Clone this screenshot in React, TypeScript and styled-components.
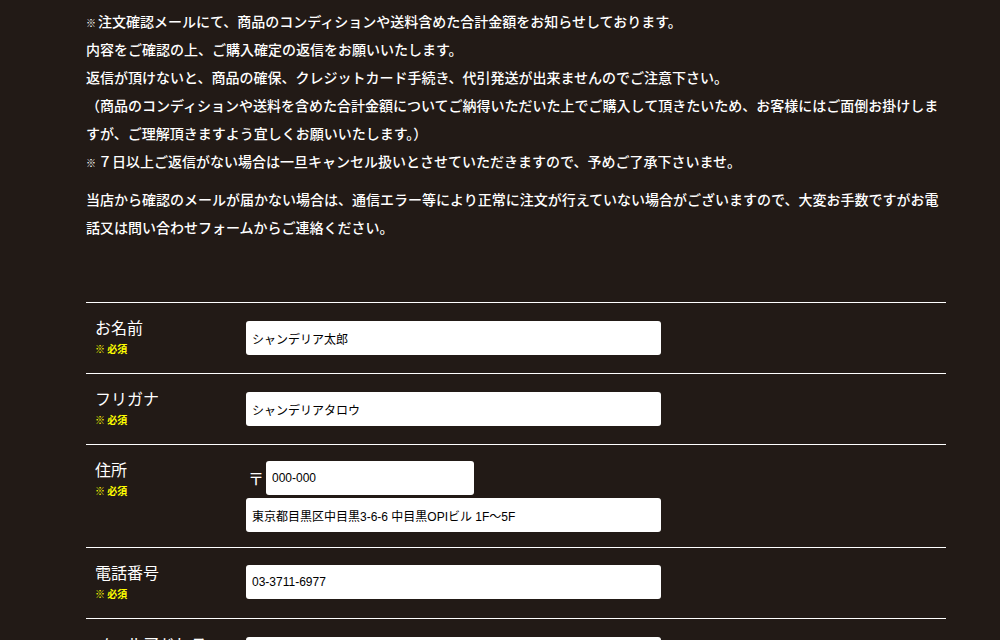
import React from "react";
import styled, { createGlobalStyle } from "styled-components";

const Global = createGlobalStyle`
  html, body {
    margin: 0;
    padding: 0;
    background: #221a16;
  }
  body {
    font-family: "Noto Sans CJK JP", "Liberation Sans", sans-serif;
    color: #ffffff;
  }
`;

const Page = styled.div`
  width: 860px;
  margin-left: 86px;
  padding-top: 7px;
  padding-bottom: 40px;
`;

const Notice = styled.p`
  margin: 0;
  font-size: 14px;
  line-height: 28px;
  font-weight: 500;
  letter-spacing: 0;
`;

const SecondNotice = styled(Notice)`
  margin-top: 10px;
`;

const Mark = styled.span`
  font-size: 10px;
  line-height: 0;
  font-weight: bold;
  margin-right: 2px;
`;

const Table = styled.div`
  margin-top: 61px;
  border-top: 1px solid #ffffff;
`;

const Row = styled.div<{ $pad?: string }>`
  display: grid;
  grid-template-columns: 160px 1fr;
  border-bottom: 1px solid #ffffff;
  padding: ${(p) => p.$pad ?? "18px 0 18px 0"};
`;

const LabelCell = styled.div<{ $offset?: number }>`
  padding-left: 9px;
  padding-top: ${(p) => p.$offset ?? 0}px;
  display: flex;
  flex-direction: column;
`;

const LabelText = styled.div`
  font-size: 16px;
  line-height: 20px;
  font-weight: 400;
  margin-top: -4px;
  color: #ffffff;
  white-space: nowrap;
`;

const Required = styled.div`
  font-size: 10px;
  line-height: 13px;
  margin-top: 5px;
  font-weight: bold;
  color: #ffff00;
`;

const FieldCell = styled.div`
  display: flex;
  flex-direction: column;
  gap: 3px;
`;

const Input = styled.input<{ $width: number }>`
  box-sizing: border-box;
  width: ${(p) => p.$width}px;
  height: 34px;
  border: none;
  border-radius: 3px;
  background: #ffffff;
  padding: 0 6px;
  font-family: "Liberation Sans", "Noto Sans CJK JP", sans-serif;
  font-size: 12px;
  color: #000000;
  outline: none;
`;

const PostalLine = styled.div`
  display: flex;
  align-items: center;
`;

const PostalMark = styled.span`
  font-size: 16px;
  width: 20px;
  padding-left: 2px;
  box-sizing: border-box;
  color: #ffffff;
`;

type Field = {
  label: string;
  values: string[];
};

const fields: Field[] = [
  { label: "お名前", values: ["シャンデリア太郎"] },
  { label: "フリガナ", values: ["シャンデリアタロウ"] },
];

export default function App() {
  return (
    <>
      <Global />
      <Page>
        <Notice>
          <Mark>※</Mark>注文確認メールにて、商品のコンディションや送料含めた合計金額をお知らせしております。
          <br />
          内容をご確認の上、ご購入確定の返信をお願いいたします。
          <br />
          返信が頂けないと、商品の確保、クレジットカード手続き、代引発送が出来ませんのでご注意下さい。
          <br />
          （商品のコンディションや送料を含めた合計金額についてご納得いただいた上でご購入して頂きたいため、お客様にはご面倒お掛けしますが、ご理解頂きますよう宜しくお願いいたします。）
          <br />
          <Mark>※</Mark>７日以上ご返信がない場合は一旦キャンセル扱いとさせていただきますので、予めご了承下さいませ。
        </Notice>
        <SecondNotice>
          当店から確認のメールが届かない場合は、通信エラー等により正常に注文が行えていない場合がございますので、大変お手数ですがお電話又は問い合わせフォームからご連絡ください。
        </SecondNotice>
        <Table>
          {fields.map((f) => (
            <Row key={f.label}>
              <LabelCell>
                <LabelText>{f.label}</LabelText>
                <Required>※ 必須</Required>
              </LabelCell>
              <FieldCell>
                <Input $width={415} value={f.values[0]} readOnly />
              </FieldCell>
            </Row>
          ))}
          <Row $pad="16px 0 15px 0">
            <LabelCell $offset={2}>
              <LabelText>住所</LabelText>
              <Required>※ 必須</Required>
            </LabelCell>
            <FieldCell>
              <PostalLine>
                <PostalMark>〒</PostalMark>
                <Input $width={208} value="000-000" readOnly />
              </PostalLine>
              <Input $width={415} value="東京都目黒区中目黒3-6-6 中目黒OPIビル 1F〜5F" readOnly />
            </FieldCell>
          </Row>
          <Row $pad="17px 0 18px 0">
            <LabelCell $offset={1}>
              <LabelText>電話番号</LabelText>
              <Required>※ 必須</Required>
            </LabelCell>
            <FieldCell>
              <Input $width={415} value="03-3711-6977" readOnly />
            </FieldCell>
          </Row>
          <Row>
            <LabelCell>
              <LabelText>メールアドレス</LabelText>
              <Required>※ 必須</Required>
            </LabelCell>
            <FieldCell>
              <Input $width={415} value="" readOnly />
            </FieldCell>
          </Row>
        </Table>
      </Page>
    </>
  );
}
